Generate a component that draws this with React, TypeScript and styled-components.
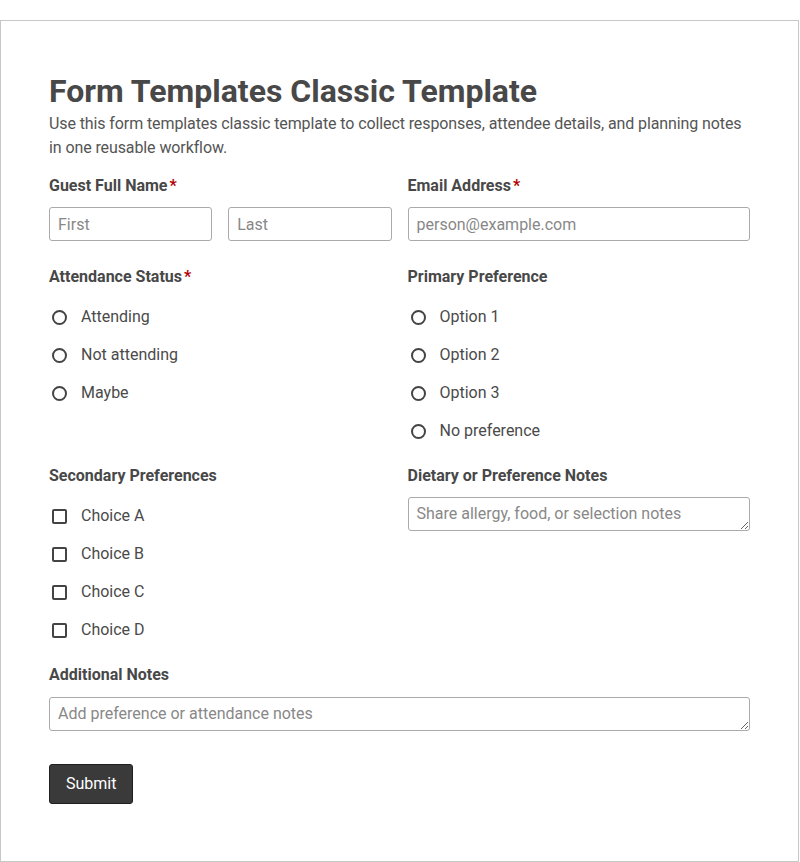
import React from 'react';
import styled, { createGlobalStyle } from 'styled-components';

const GlobalStyle = createGlobalStyle`
  html, body {
    margin: 0;
    padding: 0;
    background: #fff;
  }
  body {
    font-family: Roboto, "Liberation Sans", Arial, sans-serif;
  }
  *, *::before, *::after {
    box-sizing: border-box;
  }
`;

const Page = styled.div`
  margin-top: 20px;
  width: 799px;
  border: 1px solid #c8c8c8;
  padding: 48px 48px 57px;
  color: #444;
`;
const Title = styled.h1`
  margin: 3px 0 2px;
  font-size: 32px;
  line-height: 1.2;
  font-weight: 700;
  color: #484848;
`;
const Intro = styled.p`
  margin: 0 0 17px;
  font-size: 16px;
  line-height: 23.2px;
  letter-spacing: -0.1px;
  color: #555;
`;
const FieldGrid = styled.div`
  display: grid;
  grid-template-columns: 1fr 1fr;
  column-gap: 16px;
  row-gap: 16px;
`;
const Field = styled.div<{ $wide?: boolean }>`
  display: flex;
  flex-direction: column;
  grid-column: ${(p) => (p.$wide ? '1 / -1' : 'auto')};
  min-width: 0;
`;
const Label = styled.div`
  font-size: 16px;
  line-height: 19.2px;
  font-weight: 700;
  color: #484848;
  margin-bottom: 12px;
`;
const Required = styled.span`
  color: #b00000;
  margin-left: 2px;
`;
const NameRow = styled.div`
  display: grid;
  grid-template-columns: 1fr 1fr;
  column-gap: 16px;
`;
const TextInput = styled.input`
  width: 100%;
  height: 34px;
  margin: 0 0 10px;
  padding: 6px 8px;
  border: 1px solid #aaa;
  border-radius: 3px;
  font-family: inherit;
  font-size: 16px;
  line-height: 20px;
  color: #444;
  background: #fff;
  &::placeholder {
    color: #888;
  }
`;
const TextArea = styled.textarea`
  display: block;
  width: 100%;
  height: 34px;
  margin: 0 0 8px;
  padding: 6px 8px;
  border: 1px solid #aaa;
  border-radius: 3px;
  font-family: inherit;
  font-size: 16px;
  line-height: 20px;
  color: #444;
  resize: vertical;
  background: #fff;
  &::placeholder {
    color: #888;
  }
`;
const OptionList = styled.div`
  display: flex;
  flex-direction: column;
`;
const Option = styled.label`
  display: flex;
  align-items: center;
  gap: 14px;
  padding: 8px 0 8px 3px;
  font-size: 16px;
  line-height: 22px;
  color: #4a4a4a;
  cursor: pointer;
`;
const Mark = styled.input<{ $round?: boolean }>`
  appearance: none;
  -webkit-appearance: none;
  flex: none;
  width: 15px;
  height: 15px;
  margin: 0;
  border: 2px solid #444;
  border-radius: ${(p) => (p.$round ? '50%' : '2px')};
  background: #fff;
`;
const SubmitButton = styled.button`
  margin-top: 25px;
  padding: 10px 16px;
  border: 1px solid #1f1f1f;
  border-radius: 3px;
  background: #3a3a3a;
  color: #fff;
  font-family: inherit;
  font-size: 16px;
  line-height: 18px;
  cursor: pointer;
`;

const attendance = ['Attending', 'Not attending', 'Maybe'];
const primary = ['Option 1', 'Option 2', 'Option 3', 'No preference'];
const secondary = ['Choice A', 'Choice B', 'Choice C', 'Choice D'];

const App = () => {
  return (
    <>
      <GlobalStyle />
      <Page>
        <Title>Form Templates Classic Template</Title>
        <Intro>
          Use this form templates classic template to collect responses, attendee details, and planning notes
          in one reusable workflow.
        </Intro>
        <form onSubmit={(e) => e.preventDefault()}>
          <FieldGrid>
            <Field>
              <Label>
                Guest Full Name<Required>*</Required>
              </Label>
              <NameRow>
                <TextInput placeholder="First" />
                <TextInput placeholder="Last" />
              </NameRow>
            </Field>
            <Field>
              <Label>
                Email Address<Required>*</Required>
              </Label>
              <TextInput type="email" placeholder="person@example.com" />
            </Field>

            <Field>
              <Label>
                Attendance Status<Required>*</Required>
              </Label>
              <OptionList>
                {attendance.map((item) => (
                  <Option key={item}>
                    <Mark type="radio" name="attendance" $round />
                    {item}
                  </Option>
                ))}
              </OptionList>
            </Field>
            <Field>
              <Label>Primary Preference</Label>
              <OptionList>
                {primary.map((item) => (
                  <Option key={item}>
                    <Mark type="radio" name="primary" $round />
                    {item}
                  </Option>
                ))}
              </OptionList>
            </Field>

            <Field>
              <Label>Secondary Preferences</Label>
              <OptionList>
                {secondary.map((item) => (
                  <Option key={item}>
                    <Mark type="checkbox" />
                    {item}
                  </Option>
                ))}
              </OptionList>
            </Field>
            <Field>
              <Label>Dietary or Preference Notes</Label>
              <TextArea rows={1} placeholder="Share allergy, food, or selection notes" />
            </Field>

            <Field $wide>
              <Label>Additional Notes</Label>
              <TextArea rows={1} placeholder="Add preference or attendance notes" />
            </Field>
          </FieldGrid>
          <SubmitButton type="submit">Submit</SubmitButton>
        </form>
      </Page>
    </>
  );
};

export default App;
